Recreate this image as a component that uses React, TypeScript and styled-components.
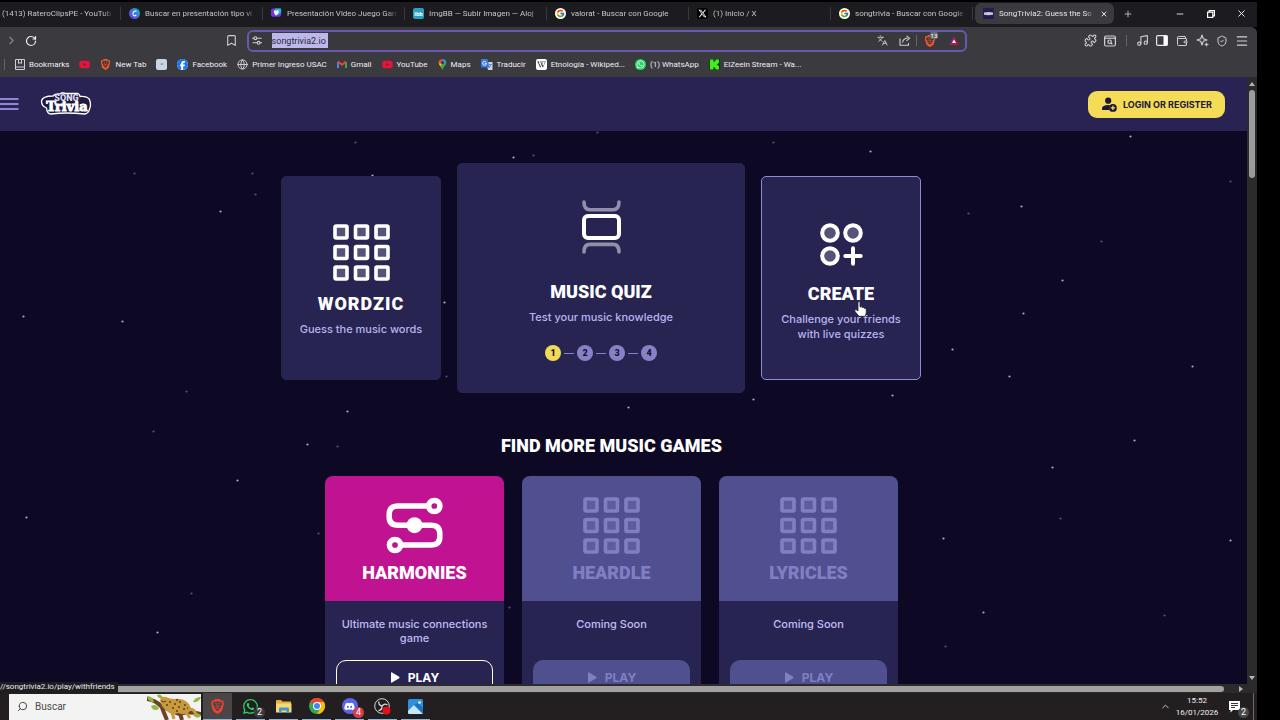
import React from "react";
import styled, { createGlobalStyle } from "styled-components";
import { FcGoogle } from "react-icons/fc";
import { FaXTwitter, FaWhatsapp, FaFacebook, FaDiscord, FaYoutube, FaWikipediaW } from "react-icons/fa6";
import { SiBrave } from "react-icons/si";
import {
  Bookmark, Globe, Languages, Menu, Minus, Music, Plus, Puzzle, RotateCw,
  Search, ShieldCheck, Wallet, X, ChevronRight, ChevronUp,
} from "lucide-react";

const GlobalStyle = createGlobalStyle`
  *, *::before, *::after { box-sizing: border-box; }
  body { margin: 0; background: #000; font-family: Inter, "Liberation Sans", sans-serif; overflow: hidden; }
  button, input { font: inherit; color: inherit; border: 0; background: none; padding: 0; margin: 0; }
  h2, h3, p, ul, ol { margin: 0; padding: 0; list-style: none; font-weight: inherit; }
  a { color: inherit; text-decoration: none; }
  svg { display: block; flex: none; }
`;

const uiFont = `Roboto, "Noto Sans", sans-serif`;
const titleFont = `Roboto, "Liberation Sans", sans-serif`;

/* ---------- Desktop and browser chrome ---------- */

const Desktop = styled.div`
  display: flex;
  flex-direction: column;
  height: 100vh;
  padding: 2px 23px 0 0;
  background: #000;
  position: relative;
`;

const TabStrip = styled.div`
  display: flex;
  align-items: center;
  height: 25px;
  padding-bottom: 2px;
  background: #1c1b20;
  color: #c6c5ca;
  font: 8px ${uiFont};
`;

const Tab = styled.a<{ $first?: boolean; $active?: boolean }>`
  display: flex;
  align-items: center;
  gap: 5px;
  flex: 0 1 ${(p) => (p.$first ? 121 : p.$active ? 139 : 142)}px;
  min-width: 0;
  height: ${(p) => (p.$active ? 21 : 13)}px;
  margin-left: ${(p) => (p.$active ? 2 : 0)}px;
  padding: 0 6px 0 ${(p) => (p.$first ? 2 : 8)}px;
  border-right: ${(p) => (p.$active ? "0" : "1px solid #39383e")};
  border-radius: ${(p) => (p.$active ? "6px" : "0")};
  background: ${(p) => (p.$active ? "#3b3a3f" : "transparent")};
  color: ${(p) => (p.$active ? "#e4e3e8" : "inherit")};
`;

const TabTitle = styled.span`
  flex: 1;
  overflow: hidden;
  white-space: nowrap;
  line-height: 13px;
  mask-image: linear-gradient(90deg, #000 90%, transparent);
`;

const IconButton = styled.button<{ $w?: number }>`
  display: grid;
  place-items: center;
  flex: none;
  width: ${(p) => p.$w ?? 20}px;
  height: 20px;
  color: #d0cfd4;
`;

const WindowControls = styled.div`
  display: flex;
  margin-left: auto;
`;

const Toolbar = styled.div`
  display: flex;
  align-items: center;
  height: 27px;
  padding: 0 5px 0 1px;
  background: #3b3a3f;
  border-top-right-radius: 6px;
`;

const Spacer = styled.div<{ $grow?: number }>`
  flex: ${(p) => p.$grow ?? 1};
`;

const AddressBar = styled.div`
  display: flex;
  align-items: center;
  flex: 0 1 720px;
  height: 22px;
  margin-left: 5px;
  border: 2px solid #6b56b4;
  border-radius: 6px;
  background: #39383d;
  color: #c4c3c8;
`;

const AddressInput = styled.input`
  width: 56px;
  height: 15px;
  margin-left: 6px;
  background: #bcb8ea;
  color: #2a2840;
  font: 9px ${uiFont};
`;

const Divider = styled.span`
  width: 1px;
  height: 11px;
  background: #66656a;
`;

const ShieldWrap = styled.span`
  position: relative;
`;

const ShieldBadge = styled.span`
  position: absolute;
  left: 6px;
  top: -3px;
  padding: 0 1px;
  border-radius: 2px;
  background: #6a696f;
  color: #fff;
  font: 6px/7px ${uiFont};
`;

const BookmarksBar = styled.nav`
  display: flex;
  align-items: center;
  gap: 10px;
  height: 23px;
  padding: 0 0 3px 4px;
  background: #3b3a3f;
  color: #f0eff4;
  font: 8px ${uiFont};
  white-space: nowrap;
`;

const BookmarkLink = styled.a`
  display: flex;
  align-items: center;
  gap: 4px;
`;

const Tile = styled.span<{ $bg: string; $size?: number; $round?: boolean; $fg?: string }>`
  display: grid;
  place-items: center;
  flex: none;
  width: ${(p) => p.$size ?? 11}px;
  height: ${(p) => p.$size ?? 11}px;
  border-radius: ${(p) => (p.$round ? "50%" : "2px")};
  background: ${(p) => p.$bg};
  color: ${(p) => p.$fg ?? "#fff"};
  font: 700 6px/8px ${uiFont};
`;

/* ---------- Web page ---------- */

const Viewport = styled.div`
  display: flex;
  flex: 1;
  min-height: 0;
`;

const Page = styled.div`
  position: relative;
  flex: 1;
  min-width: 0;
  overflow: hidden;
  background: #0d0924;
`;

const ScrollTrack = styled.div`
  display: flex;
  flex-direction: column;
  align-items: center;
  justify-content: space-between;
  width: 10px;
  padding: 5px 0 4px;
  background: #2c2b2c;
`;

const ScrollThumb = styled.div`
  width: 6px;
  height: 88px;
  margin: 4px 0 auto;
  border-radius: 3px;
  background: #9c9c9c;
`;

const HScrollTrack = styled.div`
  display: flex;
  align-items: center;
  height: 9px;
  padding: 0 14px 0 0;
  background: #2c2b2c;
`;

const HScrollThumb = styled.div`
  flex: 1;
  height: 6px;
  margin-right: 15px;
  border-radius: 3px;
  background: #a3a19f;
`;

const Sky = styled.svg`
  position: absolute;
  inset: 0;
`;

const SiteHeader = styled.header`
  position: relative;
  display: flex;
  align-items: center;
  height: 54px;
  padding-right: 22px;
  background: #282352;
`;

const MenuButton = styled.button`
  width: 19px;
  height: 14px;
  color: #8e86d2;
`;

const LogoLink = styled.a`
  margin: 0 auto 0 21px;
`;

const LoginButton = styled.button`
  display: flex;
  align-items: center;
  gap: 6px;
  height: 27px;
  padding: 0 13px 0 14px;
  border-radius: 9px;
  background: #f4dc56;
  color: #1d1738;
  font-size: 9px;
  font-weight: 700;
`;

const Main = styled.main`
  position: relative;
  padding: 32px 24px 0 0;
`;

const Hero = styled.section`
  display: flex;
  align-items: center;
  justify-content: center;
  gap: 16px;
  padding-right: 21px;
`;

const HeroCard = styled.a<{ $large?: boolean; $hovered?: boolean }>`
  position: relative;
  display: flex;
  flex-direction: column;
  align-items: center;
  justify-content: center;
  flex: 0 1 ${(p) => (p.$large ? 288 : 160)}px;
  min-height: ${(p) => (p.$large ? 230 : 204)}px;
  padding: ${(p) => (p.$hovered ? 8 : 5)}px 16px 0;
  border: 1px solid ${(p) => (p.$hovered ? "#8f8bd0" : "#272452")};
  border-radius: 5px;
  background: #272452;
  text-align: center;
`;

const Title = styled.h3<{ $top: number; $wide?: boolean }>`
  margin-top: ${(p) => p.$top}px;
  color: #fff;
  font: 900 18px/24px ${titleFont};
  letter-spacing: ${(p) => (p.$wide ? "1px" : "normal")};
`;

const Blurb = styled.p`
  margin-top: 6px;
  color: #bab4ee;
  font-size: 11px;
  font-weight: 500;
  line-height: 15px;
`;

const Steps = styled.ol`
  display: flex;
  align-items: center;
  gap: 3px;
  margin-top: 20px;
`;

const Step = styled.li<{ $current?: boolean }>`
  display: grid;
  place-items: center;
  width: 16px;
  height: 16px;
  border-radius: 50%;
  background: ${(p) => (p.$current ? "#f1da56" : "#8682c6")};
  color: #17122f;
  font: 900 9px/16px ${titleFont};
`;

const StepLine = styled.li`
  width: 10px;
  height: 1px;
  background: #8682c6;
`;

const Pointer = styled.svg`
  position: absolute;
  left: 92px;
  top: 124px;
`;

const SectionTitle = styled.h2`
  margin-top: 41px;
  color: #fff;
  font: 900 18px/24px ${titleFont};
  text-align: center;
`;

const Games = styled.section`
  display: flex;
  justify-content: center;
  gap: 18px;
  margin-top: 18px;
`;

const GameCard = styled.article`
  flex: 0 1 179px;
  height: 230px;
  border-radius: 8px;
  background: #272452;
  overflow: hidden;
`;

const GameHead = styled.div<{ $off?: boolean }>`
  display: flex;
  flex-direction: column;
  align-items: center;
  height: 125px;
  padding-top: 21px;
  background: ${(p) => (p.$off ? "#504f8f" : "#bf1391")};
  h3 { color: ${(p) => (p.$off ? "#817fc2" : "#fff")}; }
`;

const GameBody = styled.div`
  display: flex;
  flex-direction: column;
  padding: 16px 11px;
`;

const GameText = styled.p`
  height: 43px;
  color: #c3bcf4;
  font-size: 11px;
  font-weight: 500;
  line-height: 14px;
  text-align: center;
`;

const PlayButton = styled.button<{ $off?: boolean }>`
  display: flex;
  align-items: center;
  justify-content: center;
  gap: 8px;
  height: 35px;
  border: 1px solid ${(p) => (p.$off ? "#504f8f" : "#fff")};
  border-radius: 10px;
  background: ${(p) => (p.$off ? "#504f8f" : "transparent")};
  color: ${(p) => (p.$off ? "#817fc2" : "#fff")};
  font-size: 12px;
  font-weight: 700;
`;

const StatusBubble = styled.div`
  position: absolute;
  left: 0;
  bottom: 27px;
  width: 118px;
  height: 11px;
  background: #1e1d20;
  color: #eceaf0;
  font: 8px/10px ${uiFont};
  white-space: nowrap;
`;

/* ---------- Taskbar ---------- */

const Taskbar = styled.footer`
  display: flex;
  align-items: center;
  height: 27px;
  padding-left: 9px;
  background: #231f20;
`;

const SearchBox = styled.label`
  display: flex;
  align-items: center;
  gap: 7px;
  width: 192px;
  height: 26px;
  margin-right: 2px;
  padding-left: 8px;
  background: #f4f3f3;
  color: #3a3a3a;
  input { flex: 1; min-width: 0; font: 10px ${uiFont}; }
  input::placeholder { color: #4a4a4a; opacity: 1; }
`;

const SearchGlyph = styled(Search)`
  transform: scaleX(-1);
`;

const TaskButton = styled.button<{ $active?: boolean; $idle?: boolean }>`
  position: relative;
  display: grid;
  place-items: center;
  width: 29px;
  height: 27px;
  margin-right: 4px;
  border-bottom: 1px solid ${(p) => (p.$idle ? "transparent" : "#8ab6dc")};
  background: ${(p) => (p.$active ? "#4a4647" : "transparent")};
`;

const CountBadge = styled.span<{ $bg: string }>`
  position: absolute;
  right: 0;
  bottom: 1px;
  width: 11px;
  height: 11px;
  border-radius: 50%;
  background: ${(p) => p.$bg};
  color: #fff;
  font: 9px/11px ${uiFont};
  text-align: center;
`;

const Clock = styled.time`
  width: 46px;
  color: #f0eff0;
  font: 8px/12px ${uiFont};
  text-align: center;
`;

const Tray = styled.div`
  display: flex;
  align-items: center;
  margin-left: auto;
  padding-right: 3px;
`;

const TrayEdge = styled.span`
  width: 1px;
  height: 27px;
  background: #6d6a6b;
`;

/* ---------- Drawings ---------- */

const stars = [
  [23, 316, 1], [122, 321, 1], [134, 173, 0], [220, 211, 1], [252, 173, 0], [255, 194, 0], [355, 142, 0],
  [372, 175, 1], [513, 157, 1], [533, 155, 0], [773, 142, 0], [870, 151, 1], [1130, 136, 1], [1021, 206, 1],
  [968, 213, 0], [1101, 241, 0], [1023, 313, 1], [952, 349, 1], [1062, 280, 1], [1009, 376, 1], [1192, 366, 1],
  [892, 395, 1], [753, 399, 1], [628, 407, 1], [347, 411, 1], [186, 391, 0], [153, 431, 0], [307, 444, 1],
  [337, 446, 0], [237, 480, 1], [26, 517, 1], [191, 593, 0], [157, 632, 1], [444, 302, 1], [446, 376, 0],
  [509, 607, 0], [318, 533, 0], [943, 538, 1], [1052, 467, 1], [1060, 518, 0], [1134, 440, 1], [1230, 540, 1],
  [983, 612, 1], [945, 646, 0], [1164, 615, 0], [1230, 181, 0], [597, 132, 0],
];

const StarField = () => (
  <Sky width="100%" height="100%" aria-hidden="true">
    {stars.map(([x, y, bright]) => (
      <circle key={`${x}-${y}`} cx={x + 0.5} cy={y - 76.5} r="1.1" fill={bright ? "#aeaac8" : "#565178"} />
    ))}
  </Sky>
);

const SquaresIcon = ({ stroke = "#fff", fill = "#55537a" }) => (
  <svg width="57" height="57" viewBox="0 0 57 57" fill={fill} stroke={stroke} strokeWidth="3.6" strokeLinejoin="round">
    {[2, 22.5, 43].map((y) => [2, 22.5, 43].map((x) => <rect key={`${x}-${y}`} x={x} y={y} width="12" height="12" rx="1" />))}
  </svg>
);

const CarouselIcon = () => (
  <svg width="39" height="54" viewBox="0 0 39 54" fill="none" strokeWidth="4" strokeLinecap="round">
    <rect x="2" y="16" width="35" height="22" rx="4" stroke="#fff" />
    <path d="M2 2C2 7 4 9.7 8 9.7H31C35 9.7 37 7 37 2" stroke="#918fac" strokeWidth="3.6" />
    <path d="M2 52C2 47 4 44.4 8 44.4H31C35 44.4 37 47 37 52" stroke="#918fac" strokeWidth="3.6" />
  </svg>
);

const CreateIcon = () => (
  <svg width="43" height="43" viewBox="0 0 43 43" fill="#55537a" stroke="#fff" strokeWidth="4" strokeLinecap="round">
    <circle cx="10" cy="10" r="7.8" />
    <circle cx="33" cy="10" r="7.8" />
    <circle cx="10" cy="33" r="7.8" />
    <path d="M33 25.3V40.7M25.3 33H40.7" />
  </svg>
);

const HarmoniesIcon = () => (
  <svg width="57" height="57" viewBox="0 0 57 57" fill="none" stroke="#fff" strokeWidth="5.5">
    <path d="M42 9H12Q3.2 9 3.2 17V20Q3.2 28.2 12 28.2H45Q53.8 28.2 53.8 36.5V40Q53.8 48 45 48H15" />
    <circle cx="48.3" cy="9" r="5.6" />
    <circle cx="9" cy="48" r="5.6" />
    <circle cx="28.5" cy="28.2" r="8" fill="#fff" stroke="none" />
  </svg>
);

const PlayIcon = () => (
  <svg width="10" height="11" viewBox="0 0 10 11" fill="currentColor">
    <path d="M1 .8Q1 0 2 .4L9.2 4.8Q10 5.5 9.2 6.2L2 10.6Q1 11 1 10Z" />
  </svg>
);

const Logo = () => (
  <svg width="52" height="24" viewBox="0 0 52 24" role="img" aria-label="Song Trivia">
    <path
      d="M13 4Q15 1.500 20 2L22 .8L26 1.500H38Q40 2.500 40 4.500Q47 4 49.500 7.500Q51.500 13 49.500 17Q49 21 45 22Q26 20 11 22Q7 22 6.500 16Q1.500 14 1.500 9Q2.500 4 13 4Z"
      fill="#1d1940" stroke="#fff" strokeWidth="1.3"
    />
    <text x="26.500" y="9" textAnchor="middle" fontFamily="Roboto, sans-serif" fontWeight="900" fontSize="9" fill="#dcd9ee">SONG</text>
    <text x="27" y="18.600" textAnchor="middle" fontFamily="DejaVu Serif, serif" fontWeight="700" fontSize="13" fill="#fff" stroke="#fff" strokeWidth=".9">Trivia</text>
  </svg>
);

const PersonAddIcon = () => (
  <svg width="15" height="15" viewBox="0 0 15 15">
    <circle cx="6.2" cy="3.7" r="3.1" fill="currentColor" />
    <path d="M0 13V11.5Q0 8 6.5 8Q8 8 8 8.3Q6.5 10 7 13Z" fill="currentColor" />
    <circle cx="10.9" cy="10.9" r="3.9" fill="currentColor" />
    <path d="M10.9 8.7V13.1M8.7 10.9H13.1" stroke="#f4dc56" strokeWidth="1.3" />
  </svg>
);

const HandPointer = () => (
  <Pointer width="13" height="16" viewBox="0 0 13 16" aria-hidden="true">
    <path
      d="M4 1.5Q4 .5 5 .5T6 1.5V6Q7.500 5 8 6.500Q9.500 5.800 10 7.200Q12.300 6.700 12.300 9V11Q12.300 13 11 15.300H5L1 10.500Q0 8.500 2 8.500L4 10Z"
      fill="#fff" stroke="#222" strokeWidth=".8"
    />
  </Pointer>
);

const BurgerIcon = () => (
  <svg width="19" height="14" viewBox="0 0 19 14" stroke="currentColor" strokeWidth="2">
    <path d="M0 2H18.500M0 7H18.500M0 12H18.500" />
  </svg>
);

const TuneIcon = () => (
  <svg width="10" height="9" viewBox="0 0 10 9" fill="none" stroke="currentColor" strokeWidth="1.1">
    <path d="M0 2.200H2M5 2.200H9.500M.5 6.800H5M8 6.800H10" />
    <circle cx="3.400" cy="2.200" r="1.400" />
    <circle cx="6.600" cy="6.800" r="1.400" />
  </svg>
);

const ShareIcon = () => (
  <svg width="12" height="11" viewBox="0 0 12 11" fill="none" stroke="currentColor" strokeWidth="1.1">
    <path d="M1 3.500V10.300H9.500V8" />
    <path d="M3.500 7.500Q4 3.500 8.500 3.300M7.500 .8L10.500 3.300L7.500 5.800" />
  </svg>
);

const SparkleIcon = () => (
  <svg width="13" height="13" viewBox="0 0 13 13" fill="none" stroke="currentColor" strokeWidth="1.1" strokeLinejoin="round">
    <path d="M6 1L7.300 4.700L11 6L7.300 7.300L6 11L4.700 7.300L1 6L4.700 4.700Z" />
    <path d="M10.500 8.500L11 10L12.500 10.500L11 11L10.500 12.500L10 11L8.500 10.500L10 10Z" fill="currentColor" strokeWidth=".4" />
  </svg>
);

const BatIcon = () => (
  <svg width="10" height="9" viewBox="0 0 10 9">
    <path d="M5 0L10 9H0Z" fill="#b5173f" />
    <path d="M5 0L0 9L5 6Z" fill="#6a2a8c" />
    <path d="M5 3.500L7 7H3Z" fill="#fff" />
  </svg>
);

const TabSearchIcon = () => (
  <svg width="12" height="12" viewBox="0 0 12 12" fill="none" stroke="currentColor" strokeWidth="1.2">
    <rect x=".6" y="1" width="10.800" height="10" rx="1.500" />
    <path d="M1 3.200H11" />
    <circle cx="5.600" cy="6.700" r="1.700" />
    <path d="M7 8L8.300 9.300" />
  </svg>
);

const SidebarIcon = () => (
  <svg width="12" height="11" viewBox="0 0 12 11">
    <rect x=".6" y=".6" width="10.800" height="9.800" rx="1.300" fill="none" stroke="#e8e7ec" strokeWidth="1.2" />
    <path d="M7.500 .6H11.400V10.400H7.500Z" fill="#fff" />
  </svg>
);

const RestoreIcon = () => (
  <svg width="8" height="8" viewBox="0 0 8 8" fill="none" stroke="#fff" strokeWidth="1.200">
    <path d="M2.200 2V.6H7.400V5.800H6" />
    <rect x=".6" y="2.200" width="5.200" height="5.200" />
  </svg>
);

const ShelfIcon = () => (
  <svg width="10" height="11" viewBox="0 0 10 11" fill="none" stroke="#cfced3">
    <path d="M.5 .5H9.500V10.500H.5ZM.5 8H9.500M3.500 .5V4.500L5 3.500L6.500 4.500V.5" />
  </svg>
);

const GmailIcon = () => (
  <svg width="10" height="8" viewBox="0 0 10 8" fill="none" strokeWidth="2">
    <path d="M1 8V2" stroke="#4285f4" />
    <path d="M9 8V2" stroke="#34a853" />
    <path d="M1 1.500L5 4.800L9 1.500" stroke="#ea4335" />
  </svg>
);

const MapsIcon = () => (
  <svg width="9" height="11" viewBox="0 0 9 11">
    <path d="M4.500 11Q4 8 1.500 6.200Q-.5 3 2 1L4.500 4Z" fill="#fbbc04" />
    <path d="M4.500 11Q5 8 7.500 6.200Q9.500 3 7 1L3 6Z" fill="#34a853" />
    <path d="M.5 3Q1.500 0 4.500 0L5 2L2 5Z" fill="#ea4335" />
    <path d="M4.500 0Q7 0 8 2L5.500 4.500L4 2Z" fill="#4285f4" />
    <circle cx="4.500" cy="3.700" r="1.400" fill="#24324d" />
  </svg>
);

const TranslateTile = () => (
  <svg width="12" height="11" viewBox="0 0 12 11">
    <path d="M5 3H11.500V11H7Z" fill="#c9d3e6" />
    <path d="M0 0H6.500L8.500 8.500H0Z" fill="#3f78dd" />
    <path d="M5.200 3.300A1.900 1.900 0 1 0 5.500 4.600H3.800" fill="none" stroke="#fff" />
    <path d="M8 5.500H11M9.500 5V6Q9.500 8 8 9" fill="none" stroke="#5c7fb8" strokeWidth=".8" />
  </svg>
);

const CanvaIcon = () => (
  <svg width="11" height="11" viewBox="0 0 11 11">
    <defs>
      <linearGradient id="canva" x1="0" y1="1" x2="1" y2="0">
        <stop offset="0" stopColor="#7d2ae8" />
        <stop offset="1" stopColor="#00c4cc" />
      </linearGradient>
    </defs>
    <circle cx="5.500" cy="5.500" r="5.500" fill="url(#canva)" />
    <path d="M7.300 3.800Q6.500 2.300 5 3.400Q3.400 5 4.200 7Q5.300 8.700 7.300 7" fill="none" stroke="#fff" strokeWidth="1.100" />
  </svg>
);

const DeckIcon = () => (
  <svg width="11" height="11" viewBox="0 0 12 11">
    <rect width="11" height="9" rx="2" fill="#7434dc" />
    <path d="M4 0H11V5L7 7Z" fill="#25b9d6" />
    <path d="M3 3.500Q3 2 4.500 2Q5.500 2 5.500 3Q6 2 7 2Q8.500 2 8.500 3.500Q8 6.500 5.500 8Q3.500 6.500 3 3.500Z" fill="#fff" opacity=".9" />
  </svg>
);

const SongTriviaFavicon = () => (
  <svg width="11" height="11" viewBox="0 0 11 11">
    <rect width="11" height="11" rx="1" fill="#221d4c" />
    <path d="M1 4.500Q5.500 3.500 10 4.500V6.800Q5.500 7.500 1 6.800Z" fill="#c9c6dd" />
  </svg>
);

const KickIcon = () => (
  <svg width="11" height="11" viewBox="0 0 11 11">
    <rect width="11" height="11" fill="#123a08" />
    <path d="M1 .5H4.500V3H5.500V2H6.500V.5H10V4H9V5H8V6H9V7H10V10.500H6.500V9H5.500V8H4.500V10.500H1Z" fill="#3df016" />
  </svg>
);

const ChromeIcon = () => (
  <svg width="16" height="16" viewBox="0 0 16 16">
    <circle cx="8" cy="8" r="8" fill="#34a853" />
    <path d="M8 8L1.070 4A8 8 0 0 1 14.930 4H8Z" fill="#ea4335" />
    <path d="M8 8V4H14.930A8 8 0 0 1 8 16L11.460 10Z" fill="#fbbc04" />
    <circle cx="8" cy="8" r="4" fill="#fff" />
    <circle cx="8" cy="8" r="3" fill="#4285f4" />
  </svg>
);

const FolderIcon = () => (
  <svg width="16" height="13" viewBox="0 0 16 13">
    <path d="M0 1Q0 0 1 0H5L6.500 1.500H15V12H0Z" fill="#e5b33c" />
    <path d="M0 3.500H15.500V12.500H0Z" fill="#f8d775" />
    <path d="M3 13V8.500Q3 7.500 4 7.500H12Q13 7.500 13 8.500V13H10.500V10.500H5.500V13Z" fill="#3f9bc9" />
  </svg>
);

const ObsIcon = () => (
  <svg width="17" height="17" viewBox="0 0 17 17">
    <circle cx="8" cy="8" r="7.300" fill="#201d1e" stroke="#d8d6d6" />
    <path d="M8 8Q4 7 5 3.500M8 8Q10.500 4.800 13.500 7M8 8Q8.500 12 4.500 12.500" fill="none" stroke="#d8d6d6" strokeWidth="1.300" />
    <circle cx="12.500" cy="12.500" r="4" fill="#e01018" />
  </svg>
);

const PhotosIcon = () => (
  <svg width="15" height="15" viewBox="0 0 15 15">
    <rect width="15" height="15" rx="1.500" fill="#2c8fdf" />
    <path d="M0 12L6 6L15 15H1.500Q0 15 0 13.500Z" fill="#c6e7fb" />
    <path d="M6 6L15 15V9L10 4Z" fill="#1660ae" opacity=".6" />
    <circle cx="11.500" cy="3.500" r="1.300" fill="#fff" />
  </svg>
);

const JaguarArt = () => (
  <svg width="54" height="26" viewBox="0 0 54 26" aria-hidden="true">
    <path d="M0 5Q8 6 14 12Q25 17 32 20Q42 17 54 20" fill="none" stroke="#6b4327" strokeWidth="4" />
    <path d="M14 11Q17 19 20 26M33 19L35 26" stroke="#6b4327" strokeWidth="4" />
    <path d="M0 2Q6 2 7 8Q1 8 0 2ZM4 12Q10 9 12 15Q6 18 4 12ZM46 8Q48 3 54 3Q52 9 46 8ZM10 1Q14 -1 16 4Q11 5 10 1ZM46 21Q51 17 54 22Q50 26 46 21Z" fill="#8dbb3e" />
    <path d="M13 6Q14 2 19 3Q23 5 27 5Q37 4 42 10Q46 16 41 19Q37 21 31 19Q24 22 20 17Q14 13 13 6Z" fill="#c69a3d" />
    <path d="M38 17L43 24M25 18L27 25M41 15Q48 14 49 22" stroke="#c69a3d" strokeWidth="3" fill="none" />
    <path d="M22 8H24M27 10H29M32 8H34M37 11H39M25 14H27M31 13H33M36 15H38M19 11H21M29 17H31M40 14H41M29 6H31" stroke="#59401c" strokeWidth="1.500" />
    <path d="M14 7Q17 9 19 7" stroke="#59401c" fill="none" />
  </svg>
);

const NotificationIcon = () => (
  <svg width="13" height="13" viewBox="0 0 13 13">
    <path d="M1 1H12V10H5L2.500 12.500V10H1Z" fill="#fff" />
    <path d="M3 3.500H10M3 5.500H10M3 7.500H7" stroke="#39373a" />
  </svg>
);

/* ---------- Page content ---------- */

const bookmarks = [
  { label: "Bookmarks", icon: <ShelfIcon /> },
  { label: "", icon: <FaYoutube size={11} color="#e8123c" /> },
  { label: "New Tab", icon: <SiBrave size={11} color="#f1562b" /> },
  { label: "", icon: <Tile $bg="#cbd6e2" $fg="#7f97b0">≈</Tile> },
  { label: "Facebook", icon: <Tile $bg="#fff" $round><FaFacebook size={11} color="#1877f2" /></Tile> },
  { label: "Primer Ingreso USAC", icon: <Globe size={11} color="#d7d6da" /> },
  { label: "Gmail", icon: <GmailIcon /> },
  { label: "YouTube", icon: <FaYoutube size={11} color="#e8123c" /> },
  { label: "Maps", icon: <MapsIcon /> },
  { label: "Traducir", icon: <TranslateTile /> },
  { label: "Etnología - Wikiped...", icon: <Tile $bg="#fff" $fg="#111"><FaWikipediaW size={9} /></Tile> },
  { label: "(1) WhatsApp", icon: <Tile $bg="#25d366" $round><FaWhatsapp size={9} /></Tile> },
  { label: "ElZeein Stream - Wa...", icon: <KickIcon /> },
];

const Chrome = () => (
  <>
    <TabStrip>
      <Tab href="#" $first><TabTitle>(1413) RateroClipsPE - YouTub</TabTitle></Tab>
      <Tab href="#"><CanvaIcon /><TabTitle>Buscar en presentación tipo vi</TabTitle></Tab>
      <Tab href="#"><DeckIcon /><TabTitle>Presentación Video Juego Gam</TabTitle></Tab>
      <Tab href="#"><Tile $bg="#2a9fc4">ibb</Tile><TabTitle>ImgBB — Subir Imagen — Aloj</TabTitle></Tab>
      <Tab href="#"><Tile $bg="#fff" $round><FcGoogle size={9} /></Tile><TabTitle>valorat - Buscar con Google</TabTitle></Tab>
      <Tab href="#"><Tile $bg="#000"><FaXTwitter size={9} /></Tile><TabTitle>(1) Inicio / X</TabTitle></Tab>
      <Tab href="#"><Tile $bg="#fff" $round><FcGoogle size={9} /></Tile><TabTitle>songtrivia - Buscar con Google</TabTitle></Tab>
      <Tab href="#" $active>
        <SongTriviaFavicon />
        <TabTitle>SongTrivia2: Guess the So</TabTitle>
        <X size={8} strokeWidth={3} />
      </Tab>
      <IconButton $w={28} aria-label="New tab"><Plus size={10} /></IconButton>
      <WindowControls>
        <IconButton $w={31} aria-label="Minimize"><Minus size={10} color="#fff" /></IconButton>
        <IconButton $w={31} aria-label="Restore"><RestoreIcon /></IconButton>
        <IconButton $w={31} aria-label="Close"><X size={11} color="#fff" /></IconButton>
      </WindowControls>
    </TabStrip>
    <Toolbar>
      <IconButton aria-label="Forward"><ChevronRight size={13} color="#8a898e" /></IconButton>
      <IconButton aria-label="Reload"><RotateCw size={12} strokeWidth={2.4} color="#f0eff4" /></IconButton>
      <Spacer $grow={180} />
      <IconButton aria-label="Bookmark this page"><Bookmark size={13} /></IconButton>
      <AddressBar>
        <IconButton $w={17} aria-label="Site settings"><TuneIcon /></IconButton>
        <AddressInput aria-label="Address" defaultValue="songtrivia2.io" />
        <Spacer />
        <IconButton $w={23} aria-label="Translate"><Languages size={11} /></IconButton>
        <IconButton $w={22} aria-label="Share"><ShareIcon /></IconButton>
        <Divider />
        <IconButton $w={26} aria-label="Brave Shields">
          <ShieldWrap><SiBrave size={12} color="#f1562b" /><ShieldBadge>13</ShieldBadge></ShieldWrap>
        </IconButton>
        <IconButton $w={22} aria-label="Rewards"><BatIcon /></IconButton>
      </AddressBar>
      <Spacer $grow={113} />
      <IconButton aria-label="Extensions"><Puzzle size={13} /></IconButton>
      <IconButton aria-label="Search tabs"><TabSearchIcon /></IconButton>
      <IconButton as="span" $w={12}><Divider /></IconButton>
      <IconButton aria-label="Media"><Music size={13} /></IconButton>
      <IconButton aria-label="Sidebar"><SidebarIcon /></IconButton>
      <IconButton aria-label="Wallet"><Wallet size={12} /></IconButton>
      <IconButton aria-label="Assistant"><SparkleIcon /></IconButton>
      <IconButton aria-label="VPN"><ShieldCheck size={12} /></IconButton>
      <IconButton aria-label="Menu"><Menu size={14} /></IconButton>
    </Toolbar>
    <BookmarksBar aria-label="Bookmarks">
      <Divider />
      {bookmarks.map((b, i) => (
        <BookmarkLink href="#" key={i}>{b.icon}{b.label && <span>{b.label}</span>}</BookmarkLink>
      ))}
    </BookmarksBar>
  </>
);

const games = [
  { name: "HARMONIES", text: "Ultimate music connections game", off: false },
  { name: "HEARDLE", text: "Coming Soon", off: true },
  { name: "LYRICLES", text: "Coming Soon", off: true },
];

export default function App() {
  return (
    <Desktop>
      <GlobalStyle />
      <Chrome />
      <Viewport>
        <Page>
          <StarField />
          <SiteHeader>
            <MenuButton aria-label="Open menu"><BurgerIcon /></MenuButton>
            <LogoLink href="#"><Logo /></LogoLink>
            <LoginButton><PersonAddIcon />LOGIN OR REGISTER</LoginButton>
          </SiteHeader>
          <Main>
            <Hero>
              <HeroCard href="#">
                <SquaresIcon />
                <Title $top={11} $wide>WORDZIC</Title>
                <Blurb>Guess the music words</Blurb>
              </HeroCard>
              <HeroCard href="#" $large>
                <CarouselIcon />
                <Title $top={26}>MUSIC QUIZ</Title>
                <Blurb>Test your music knowledge</Blurb>
                <Steps>
                  <Step $current>1</Step><StepLine />
                  <Step>2</Step><StepLine />
                  <Step>3</Step><StepLine />
                  <Step>4</Step>
                </Steps>
              </HeroCard>
              <HeroCard href="#" $hovered>
                <CreateIcon />
                <Title $top={16}>CREATE</Title>
                <Blurb>Challenge your friends with live quizzes</Blurb>
                <HandPointer />
              </HeroCard>
            </Hero>
            <SectionTitle>FIND MORE MUSIC GAMES</SectionTitle>
            <Games>
              {games.map((g) => (
                <GameCard key={g.name}>
                  <GameHead $off={g.off}>
                    {g.off ? <SquaresIcon stroke="#817fc2" fill="#5e5c9e" /> : <HarmoniesIcon />}
                    <Title $top={7}>{g.name}</Title>
                  </GameHead>
                  <GameBody>
                    <GameText>{g.text}</GameText>
                    <PlayButton $off={g.off}><PlayIcon />PLAY</PlayButton>
                  </GameBody>
                </GameCard>
              ))}
            </Games>
          </Main>
        </Page>
        <ScrollTrack>
          <svg width="6" height="4" viewBox="0 0 6 4"><path d="M3 0L6 4H0Z" fill="#b5b5b5" /></svg>
          <ScrollThumb />
          <svg width="6" height="4" viewBox="0 0 6 4"><path d="M0 0H6L3 4Z" fill="#b5b5b5" /></svg>
        </ScrollTrack>
      </Viewport>
      <HScrollTrack>
        <HScrollThumb />
        <svg width="4" height="6" viewBox="0 0 4 6"><path d="M0 0L4 3L0 6Z" fill="#b5b5b5" /></svg>
      </HScrollTrack>
      <Taskbar>
        <SearchBox>
          <SearchGlyph size={11} />
          <input aria-label="Buscar" placeholder="Buscar" />
          <JaguarArt />
        </SearchBox>
        <TaskButton $active aria-label="Brave"><SiBrave size={15} color="#ee4130" /></TaskButton>
        <TaskButton aria-label="WhatsApp"><FaWhatsapp size={17} color="#2fd36b" /><CountBadge $bg="#3c3a3b">2</CountBadge></TaskButton>
        <TaskButton aria-label="File Explorer"><FolderIcon /></TaskButton>
        <TaskButton aria-label="Chrome"><ChromeIcon /></TaskButton>
        <TaskButton aria-label="Discord">
          <Tile $bg="#5a64ea" $round $size={16}><FaDiscord size={11} /></Tile>
          <CountBadge $bg="#d83c4a">4</CountBadge>
        </TaskButton>
        <TaskButton aria-label="OBS"><ObsIcon /></TaskButton>
        <TaskButton aria-label="Photos"><PhotosIcon /></TaskButton>
        <Tray>
          <IconButton $w={17} aria-label="Hidden icons"><ChevronUp size={11} /></IconButton>
          <Clock>15:52<br />16/01/2026</Clock>
          <TaskButton $idle aria-label="Notifications"><NotificationIcon /><CountBadge $bg="#4a4849">2</CountBadge></TaskButton>
          <TrayEdge />
        </Tray>
      </Taskbar>
      <StatusBubble>//songtrivia2.io/play/withfriends</StatusBubble>
    </Desktop>
  );
}
